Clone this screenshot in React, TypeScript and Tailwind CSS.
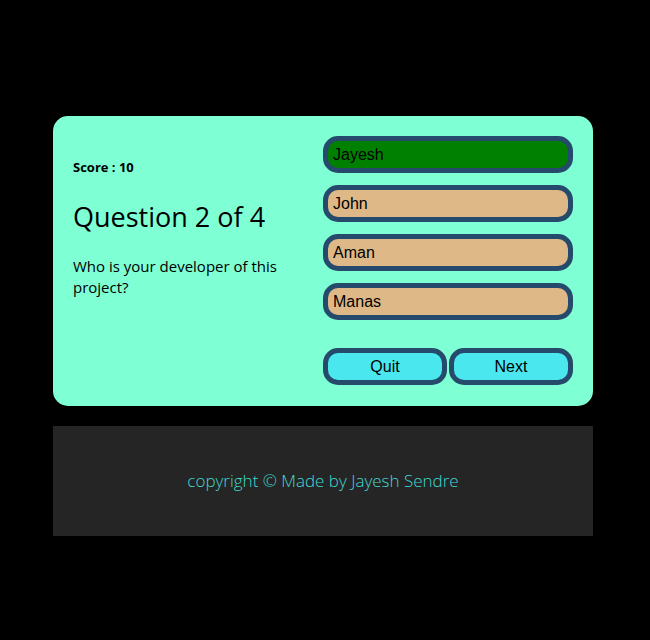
import React from "react";

const answers = [
  { text: "Jayesh", correct: true },
  { text: "John", correct: false },
  { text: "Aman", correct: false },
  { text: "Manas", correct: false },
];

export default function App() {
  return (
    <div className="min-h-[640px] w-[650px] bg-black pt-[116px] pl-[53px]" style={{ fontFamily: '"Open Sans", "Noto Sans", sans-serif' }}>
      <div className="flex w-[540px] h-[290px] rounded-[15px] bg-[#7fffd4] px-[20px] pt-[20px]">
        <div className="flex w-[230px] flex-col">
          <div className="mt-[20px] text-[13px] font-bold leading-[22px] text-black">Score : 10</div>
          <div className="mt-[22px] text-[27px] leading-[34px] text-black">Question 2 of 4</div>
          <div className="mt-[22px] text-[15px] leading-[21px] text-black">Who is your developer of this project?</div>
        </div>
        <div className="ml-auto flex w-[250px] flex-col">
          <div className="flex flex-col gap-[12px]">
            {answers.map((a) => (
              <button
                key={a.text}
                className={`h-[37px] w-[250px] rounded-[15px] border-[5px] border-[#254a6b] pl-[5px] text-left text-[16px] text-black ${a.correct ? "bg-[#008000]" : "bg-[#deb887]"}`}
                style={{ fontFamily: '"Liberation Sans", Arial, sans-serif' }}
              >
                {a.text}
              </button>
            ))}
          </div>
          <div className="mt-[28px] flex gap-[2px]">
            {["Quit", "Next"].map((t) => (
              <button
                key={t}
                className="h-[37px] w-[124px] rounded-[15px] border-[5px] border-[#254a6b] bg-[#4ae8ee] text-center text-[16px] text-black"
                style={{ fontFamily: '"Liberation Sans", Arial, sans-serif' }}
              >
                {t}
              </button>
            ))}
          </div>
        </div>
      </div>
      <div className="mt-[20px] flex h-[110px] w-[540px] items-center justify-center bg-[#252525]">
        <span className="text-[17px] font-light text-[#40d8d0]">copyright © Made by Jayesh Sendre</span>
      </div>
    </div>
  );
}
